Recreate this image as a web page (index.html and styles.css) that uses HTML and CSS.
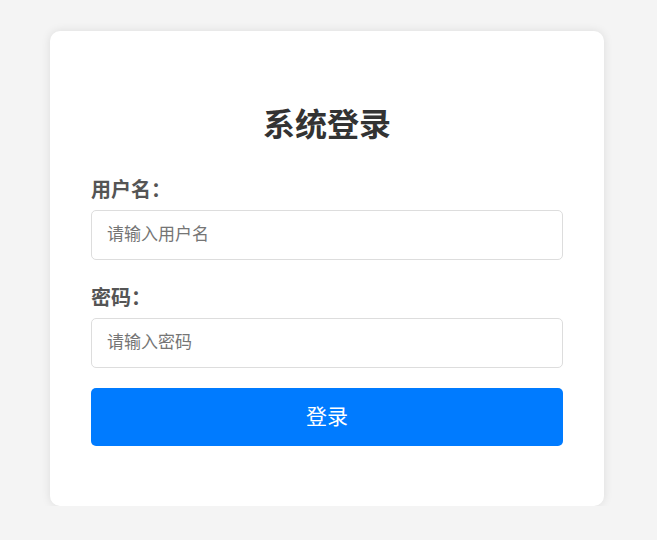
FILE: index.html
```html
<!DOCTYPE html>
<html lang="zh-CN">
<head>
  <meta charset="UTF-8">
  <title>系统登录</title>
  <link rel="stylesheet" href="styles.css">
</head>
<body>
  <div class="login-box">
    <h2>系统登录</h2>
    <form onsubmit="return false;">
      <div class="field">
        <label for="username">用户名：</label>
        <input type="text" id="username" placeholder="请输入用户名">
      </div>
      <div class="field">
        <label for="password">密码：</label>
        <input type="password" id="password" placeholder="请输入密码">
      </div>
      <button type="submit">登录</button>
    </form>
  </div>
</body>
</html>
```

FILE: styles.css
```css
body {
  margin: 0;
  font-family: 'Noto Sans CJK SC', 'Noto Sans', Arial, sans-serif;
  background: #f4f4f4;
}
.login-box {
  width: 472px;
  margin: 31px 0 0 50px;
  background: #fff;
  padding: 40px 41px 60px;
  border-radius: 10px;
  box-shadow: 0 0 10px rgba(0,0,0,0.1);
}
h2 {
  margin: 31px 0 35px;
  font-size: 32px;
  line-height: 40px;
  text-align: center;
  color: #333;
}
.field {
  margin-bottom: 25px;
}
.field:last-of-type {
  margin-bottom: 20px;
}
label {
  display: block;
  margin-bottom: 9px;
  font-size: 20px;
  line-height: 24px;
  font-weight: bold;
  color: #555;
}
input {
  display: block;
  box-sizing: border-box;
  width: 100%;
  height: 50px;
  padding: 0 15px 5px;
  border: 1px solid #ddd;
  border-radius: 5px;
  font-family: inherit;
  font-size: 17px;
  color: #333;
}
input::placeholder {
  color: #757575;
}
button {
  display: block;
  width: 100%;
  height: 58px;
  padding: 0 0 5px;
  border: none;
  border-radius: 5px;
  background: #007bff;
  color: #fff;
  font-family: inherit;
  font-size: 21px;
  cursor: pointer;
}
```
